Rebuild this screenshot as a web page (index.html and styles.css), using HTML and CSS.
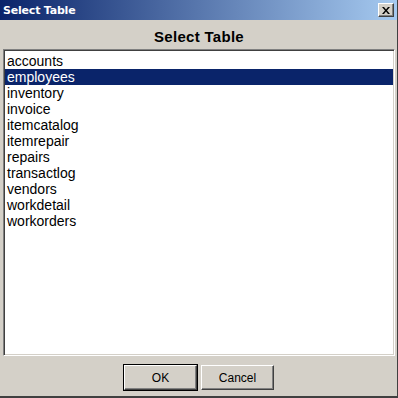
FILE: index.html
```html
<!DOCTYPE html>
<html lang="en">
<head>
    <meta charset="UTF-8">
    <title>Select Table</title>
    <link rel="stylesheet" href="styles.css">
</head>
<body>
    <div class="window">
        <div class="titlebar">
            <span class="title">Select Table</span>
            <button class="close">
                <svg width="8" height="7" viewBox="0 0 8 7"><path d="M0 0h2l2 2.5L6 0h2L5 3.5 8 7H6L4 4.5 2 7H0l3-3.5z" fill="#000"/></svg>
            </button>
        </div>
        <div class="content">
            <h1>Select Table</h1>
            <ul class="list">
                <li>accounts</li>
                <li class="selected">employees</li>
                <li>inventory</li>
                <li>invoice</li>
                <li>itemcatalog</li>
                <li>itemrepair</li>
                <li>repairs</li>
                <li>transactlog</li>
                <li>vendors</li>
                <li>workdetail</li>
                <li>workorders</li>
            </ul>
            <div class="buttons">
                <button class="btn default">OK</button>
                <button class="btn">Cancel</button>
            </div>
        </div>
    </div>
</body>
</html>
```
FILE: styles.css
```css
body {
    margin: 0;
    padding: 0;
    font-family: "Liberation Sans", Arial, sans-serif;
    background: #d4d0c8;
}
.window {
    width: 398px;
    height: 398px;
    box-sizing: border-box;
    background: #d4d0c8;
    border-right: 1px solid #404040;
    border-bottom: 2px solid #404040;
    display: flex;
    flex-direction: column;
}
.titlebar {
    height: 20px;
    display: flex;
    align-items: center;
    justify-content: space-between;
    padding: 0 3px 0 3px;
    background: linear-gradient(to right, #0a246a, #a6caf0);
}
.title {
    color: #fff;
    font-family: "DejaVu Sans", Verdana, sans-serif;
    font-weight: bold;
    font-size: 11px;
    letter-spacing: -0.2px;
}
.close {
    width: 16px;
    height: 14px;
    padding: 0;
    margin: 0;
    background: #d4d0c8;
    border: 1px solid;
    border-color: #fff #404040 #404040 #fff;
    box-shadow: inset -1px -1px 0 #808080;
    display: flex;
    align-items: center;
    justify-content: center;
}
.content {
    flex: 1;
    display: flex;
    flex-direction: column;
    padding: 0 2px 0 3px;
}
h1 {
    margin: 0;
    height: 29px;
    line-height: 33px;
    text-align: center;
    font-size: 15px;
    letter-spacing: 0.3px;
    font-family: "Liberation Sans", Arial, sans-serif;
    color: #000;
}
.list {
    list-style: none;
    margin: 0;
    padding: 3px 1px;
    height: 307px;
    box-sizing: border-box;
    background: #fff;
    border: 1px solid;
    border-color: #808080 #fff #fff #808080;
    box-shadow: inset 1px 1px 0 #404040, inset -1px -1px 0 #d4d0c8;
}
.list li {
    height: 16px;
    line-height: 17px;
    font-size: 14px;
    padding-left: 2px;
    color: #000;
}
.list li.selected {
    background: #0a246a;
    color: #fff;
}
.buttons {
    display: flex;
    justify-content: center;
    gap: 4px;
    padding-top: 9px;
}
.btn {
    width: 73px;
    height: 25px;
    font-family: "Liberation Sans", Arial, sans-serif;
    font-size: 12px;
    color: #000;
    background: #d4d0c8;
    border: 1px solid;
    border-color: #fff #404040 #404040 #fff;
    box-shadow: inset -1px -1px 0 #808080;
    padding: 0;
}
.btn.default {
    outline: 1px solid #000;
    outline-offset: 0;
}
```
